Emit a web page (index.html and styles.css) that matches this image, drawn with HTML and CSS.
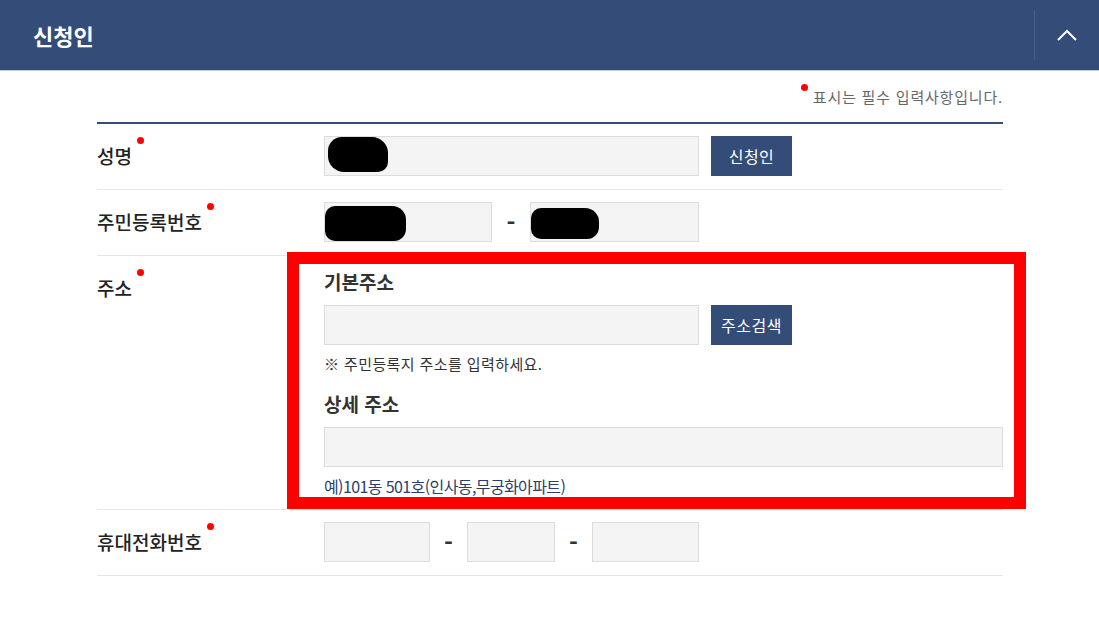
FILE: index.html
```html
<!DOCTYPE html>
<html lang="ko">
<head>
<meta charset="utf-8">
<title>신청인</title>
<link rel="stylesheet" href="styles.css">
</head>
<body>
<div class="panel-header">
  <h2 class="panel-title">신청인</h2>
  <button class="toggle" type="button" aria-label="접기">
    <svg width="20" height="12" viewBox="0 0 20 12"><polyline points="1,11 10,2 19,11" fill="none" stroke="#fff" stroke-width="2"/></svg>
  </button>
</div>
<div class="content">
  <p class="req-note"><span class="note-dot"></span> 표시는 필수 입력사항입니다.</p>
  <div class="form">
    <div class="row">
      <div class="label req">성명</div>
      <div class="field">
        <div class="input w-long"><span class="redact r-name"></span></div>
        <button class="btn" type="button">신청인</button>
      </div>
    </div>
    <div class="row">
      <div class="label req">주민등록번호</div>
      <div class="field split">
        <div class="input w-rrn1"><span class="redact r-rrn1"></span></div>
        <span class="dash">-</span>
        <div class="input w-rrn2"><span class="redact r-rrn2"></span></div>
      </div>
    </div>
    <div class="row addr-row">
      <div class="label req">주소</div>
      <div class="addr">
        <div class="sub-title">기본주소</div>
        <div class="field">
          <div class="input w-long"></div>
          <button class="btn" type="button">주소검색</button>
        </div>
        <p class="help">※ 주민등록지 주소를 입력하세요.</p>
        <div class="sub-title second">상세 주소</div>
        <div class="input w-full"></div>
        <p class="example">예)101동 501호(인사동,무궁화아파트)</p>
      </div>
      <div class="highlight"></div>
    </div>
    <div class="row">
      <div class="label req">휴대전화번호</div>
      <div class="field split">
        <div class="input w-ph1"></div>
        <span class="dash narrow">-</span>
        <div class="input w-ph2"></div>
        <span class="dash narrow">-</span>
        <div class="input w-ph3"></div>
      </div>
    </div>
  </div>
</div>
</body>
</html>
```
FILE: styles.css
```css
body {
  margin: 0;
  background: #fff;
  color: #333;
  font-family: "Noto Sans CJK KR", "Noto Sans", sans-serif;
}

.panel-header {
  height: 70px;
  background: #344c78;
  border-bottom: 1px solid #c3c8d1;
  display: flex;
  align-items: center;
  justify-content: space-between;
  padding-left: 33px;
}

.panel-title {
  margin: 0;
  font-size: 22px;
  font-weight: 700;
  color: #fff;
}

.toggle {
  width: 65px;
  height: 50px;
  padding: 0;
  border: 0;
  border-left: 1px solid #485f88;
  background: transparent;
  display: flex;
  align-items: center;
  justify-content: center;
}

.content {
  width: 906px;
  margin-left: 97px;
}

.req-note {
  margin: 0;
  padding-top: 16px;
  text-align: right;
  font-size: 15px;
  line-height: 20px;
  color: #666;
  letter-spacing: 0.8px;
}

.note-dot {
  display: inline-block;
  width: 7px;
  height: 7px;
  border-radius: 50%;
  background: #f00;
  vertical-align: top;
  margin-top: -3px;
}

.form {
  margin-top: 15px;
  border-top: 2px solid #344c78;
}

.row {
  display: grid;
  grid-template-columns: 227px 1fr;
  align-items: start;
  padding: 12px 0 13px;
  border-bottom: 1px solid #e6e6e6;
  position: relative;
}

.label {
  font-size: 19px;
  line-height: 40px;
  font-weight: 500;
  color: #222;
}

.req::after {
  content: "";
  display: inline-block;
  width: 7px;
  height: 7px;
  border-radius: 50%;
  background: #f00;
  vertical-align: top;
  margin: 1px 0 0 5px;
}

.field {
  display: flex;
  align-items: center;
  gap: 12px;
}

.field.split {
  gap: 0;
}

.input {
  box-sizing: border-box;
  height: 40px;
  background: #f4f4f4;
  border: 1px solid #dcdcdc;
  display: flex;
  align-items: center;
}

.w-long { width: 375px; }
.w-full { width: 679px; }
.w-rrn1 { width: 168px; }
.w-rrn2 { width: 169px; }
.w-ph1 { width: 106px; }
.w-ph2 { width: 88px; }
.w-ph3 { width: 107px; }

.dash {
  width: 38px;
  text-align: center;
  font-size: 24px;
  font-weight: 700;
  color: #333;
  line-height: 40px;
}

.dash.narrow {
  width: 37px;
}

.btn {
  width: 81px;
  height: 40px;
  border: 0;
  padding: 0;
  background: #344c78;
  color: #fff;
  font-family: inherit;
  font-size: 16px;
  letter-spacing: 0.5px;
}

.redact {
  display: block;
  background: #000;
  border-radius: 12px;
}

.r-name { width: 60px; height: 35px; margin: -3px 0 0 3px; border-radius: 14px 16px 10px 16px; }
.r-rrn1 { width: 81px; height: 35px; margin: 2px 0 0 0; border-radius: 10px 14px 12px 10px; }
.r-rrn2 { width: 68px; height: 31px; margin: 3px 0 0 0; border-radius: 10px 14px 12px 10px; }

.addr {
  display: flex;
  flex-direction: column;
  align-items: flex-start;
}

.sub-title {
  font-size: 19px;
  line-height: 28px;
  font-weight: 700;
  color: #333;
  margin-bottom: 9px;
}

.sub-title.second {
  margin-top: 16px;
}

.help {
  margin: 9px 0 0;
  font-size: 15px;
  line-height: 20px;
  color: #333;
  letter-spacing: 0.4px;
}

.example {
  margin: 9px 0 0;
  font-size: 16px;
  line-height: 20px;
  color: #2c3f66;
  letter-spacing: -0.6px;
}

.highlight {
  position: absolute;
  left: 190px;
  top: -4px;
  width: 739px;
  height: 257px;
  box-sizing: border-box;
  border: 12px solid #ff0000;
  pointer-events: none;
}
```
